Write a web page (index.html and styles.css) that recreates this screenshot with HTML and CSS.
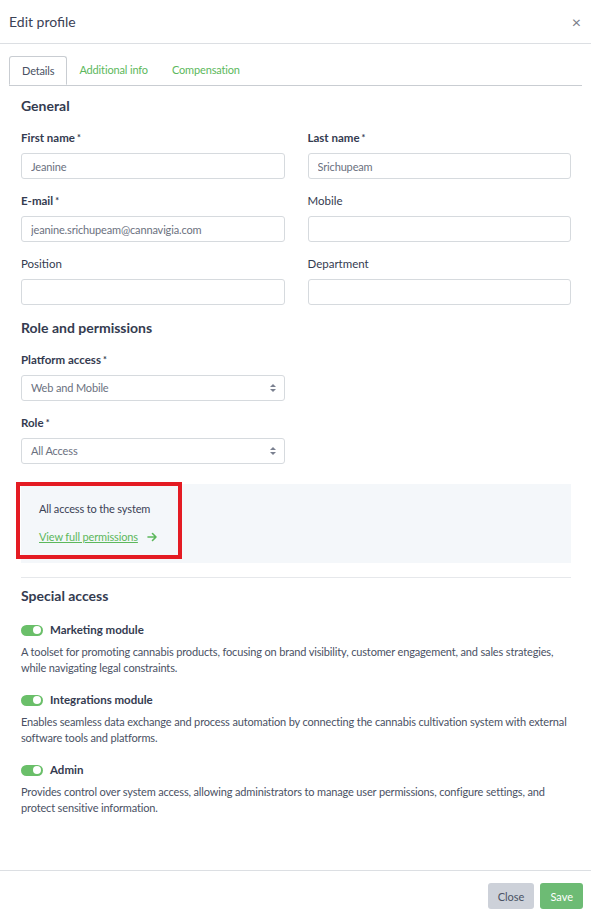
FILE: index.html
```html
<!DOCTYPE html>
<html lang="en">
<head>
    <meta charset="UTF-8">
    <meta name="viewport" content="width=device-width, initial-scale=1.0">
    <title>Edit profile</title>
    <link rel="stylesheet" href="styles.css">
</head>
<body>
    <div class="modal">
        <div class="modal-header">
            <h1 class="modal-title">Edit profile</h1>
            <span class="close-x">&times;</span>
        </div>

        <div class="tabs">
            <a class="tab active">Details</a>
            <a class="tab">Additional info</a>
            <a class="tab">Compensation</a>
        </div>

        <div class="modal-body">
            <h2 class="section-title">General</h2>
            <div class="form-grid">
                <div class="field">
                    <label class="required">First name</label>
                    <input type="text" value="Jeanine">
                </div>
                <div class="field">
                    <label class="required">Last name</label>
                    <input type="text" value="Srichupeam">
                </div>
                <div class="field">
                    <label class="required">E-mail</label>
                    <input type="text" value="jeanine.srichupeam@cannavigia.com">
                </div>
                <div class="field">
                    <label class="plain">Mobile</label>
                    <input type="text">
                </div>
                <div class="field">
                    <label class="plain">Position</label>
                    <input type="text">
                </div>
                <div class="field">
                    <label class="plain">Department</label>
                    <input type="text">
                </div>
            </div>

            <h2 class="section-title">Role and permissions</h2>
            <div class="form-grid">
                <div class="field">
                    <label class="required">Platform access</label>
                    <div class="select">Web and Mobile</div>
                </div>
                <div></div>
                <div class="field">
                    <label class="required">Role</label>
                    <div class="select">All Access</div>
                </div>
            </div>

            <div class="role-info">
                <p>All access to the system</p>
                <a class="perm-link">
                    <span>View full permissions</span>
                    <svg width="11" height="10" viewBox="0 0 11 10"><path d="M1 5h8M5.5 1.5 9 5 5.5 8.5" fill="none" stroke="#5cb85c" stroke-width="1.6" stroke-linecap="round" stroke-linejoin="round"/></svg>
                </a>
                <div class="highlight"></div>
            </div>

            <hr class="divider">

            <h2 class="section-title special">Special access</h2>
            <div class="module">
                <div class="module-head"><span class="toggle"></span>Marketing module</div>
                <p>A toolset for promoting cannabis products, focusing on brand visibility, customer engagement, and sales strategies, while navigating legal constraints.</p>
            </div>
            <div class="module">
                <div class="module-head"><span class="toggle"></span>Integrations module</div>
                <p>Enables seamless data exchange and process automation by connecting the cannabis cultivation system with external software tools and platforms.</p>
            </div>
            <div class="module">
                <div class="module-head"><span class="toggle"></span>Admin</div>
                <p>Provides control over system access, allowing administrators to manage user permissions, configure settings, and protect sensitive information.</p>
            </div>
        </div>

        <div class="modal-footer">
            <button class="btn btn-close">Close</button>
            <button class="btn btn-save">Save</button>
        </div>
    </div>
</body>
</html>
```

FILE: styles.css
```css
body {
    margin: 0;
    font-family: Lato, "Open Sans", sans-serif;
    font-size: 11px;
    letter-spacing: -0.15px;
    color: #4a5164;
    background: #fff;
}

.modal {
    height: 100vh;
    display: flex;
    flex-direction: column;
}

.modal-header {
    height: 43px;
    padding: 0 9px;
    display: flex;
    align-items: center;
    justify-content: space-between;
    border-bottom: 1px solid #dcdfe3;
}

.modal-title {
    margin: 0;
    font-size: 14px;
    font-weight: 400;
    letter-spacing: 0;
    color: #3b4256;
}

.close-x {
    font-size: 16px;
    color: #777c88;
    margin-right: 1px;
}

.tabs {
    margin: 12px 9px 0;
    display: flex;
    border-bottom: 1px solid #c9cdd2;
    height: 29px;
}

.tab {
    padding: 0 12px;
    line-height: 28px;
    color: #5cb85c;
}

.tab.active {
    color: #4a5164;
    border: 1px solid #c9cdd2;
    border-bottom-color: #fff;
    border-radius: 3px 3px 0 0;
    height: 29px;
    box-sizing: border-box;
}

.modal-body {
    flex: 1;
    padding: 0 20px 0 21px;
}

.section-title {
    margin: 10px 0 14px;
    font-size: 14px;
    font-weight: 700;
    letter-spacing: 0;
    color: #343b50;
    line-height: 20px;
}

.section-title.special {
    margin-top: 8px;
}

.form-grid {
    display: grid;
    grid-template-columns: 1fr 1fr;
    column-gap: 23px;
    row-gap: 14px;
    margin-bottom: 13px;
}

.field label {
    display: block;
    line-height: 16px;
    margin-bottom: 7px;
    font-size: 11.5px;
    letter-spacing: 0;
    color: #343b50;
}

.field label.required {
    font-weight: 700;
}

.field label.required::after {
    content: "*";
    margin-left: 2px;
    font-size: 9px;
    vertical-align: top;
}

.field input,
.select {
    display: block;
    width: 100%;
    box-sizing: border-box;
    height: 26px;
    padding: 0 9px;
    border: 1px solid #d6dade;
    border-radius: 3px;
    font-family: inherit;
    font-size: 11px;
    letter-spacing: -0.15px;
    color: #6b7180;
    background: #fff;
}

.select {
    line-height: 24px;
    position: relative;
}

.select::after {
    content: "";
    position: absolute;
    right: 8px;
    top: 8px;
    border: 3px solid transparent;
    border-bottom-color: #7a8090;
    border-top-width: 0;
    border-bottom-width: 3.5px;
}

.select::before {
    content: "";
    position: absolute;
    right: 8px;
    top: 13px;
    border: 3px solid transparent;
    border-top-color: #7a8090;
    border-bottom-width: 0;
    border-top-width: 3.5px;
}

.role-info {
    position: relative;
    margin-top: 20px;
    background: #f4f7fa;
    padding: 17px 18px 18px;
}

.role-info p {
    margin: 0 0 12px;
    line-height: 16px;
    color: #3b4256;
}

.perm-link {
    color: #5cb85c;
    line-height: 16px;
    display: flex;
    align-items: center;
    gap: 9px;
}

.perm-link span {
    text-decoration: underline;
}

.highlight {
    position: absolute;
    left: -5px;
    top: -2px;
    width: 158px;
    height: 69px;
    border: 4px solid #e41b23;
}

.divider {
    margin: 14px 0 0;
    border: 0;
    border-top: 1px solid #e6e8eb;
}

.module {
    margin-top: 16px;
}

.module-head {
    display: flex;
    align-items: center;
    font-weight: 700;
    font-size: 11.5px;
    letter-spacing: 0;
    color: #343b50;
    line-height: 16px;
}

.toggle {
    position: relative;
    width: 22px;
    height: 11px;
    border-radius: 6px;
    background: #6abf69;
    margin-right: 7px;
}

.toggle::after {
    content: "";
    position: absolute;
    right: 2px;
    top: 1.5px;
    width: 8px;
    height: 8px;
    border-radius: 50%;
    background: #fff;
}

.module p {
    margin: 6px 0 0;
    line-height: 16px;
}

.modal-footer {
    border-top: 1px solid #dcdfe3;
    padding: 12px 8px 8px;
    display: flex;
    justify-content: flex-end;
    gap: 6px;
}

.btn {
    height: 26px;
    padding: 0 10px;
    border: 0;
    border-radius: 3px;
    font-family: inherit;
    font-size: 11px;
}

.btn-close {
    background: #cdd1d9;
    color: #4a5164;
}

.btn-save {
    background: #6dbb74;
    color: #fff;
}
```
